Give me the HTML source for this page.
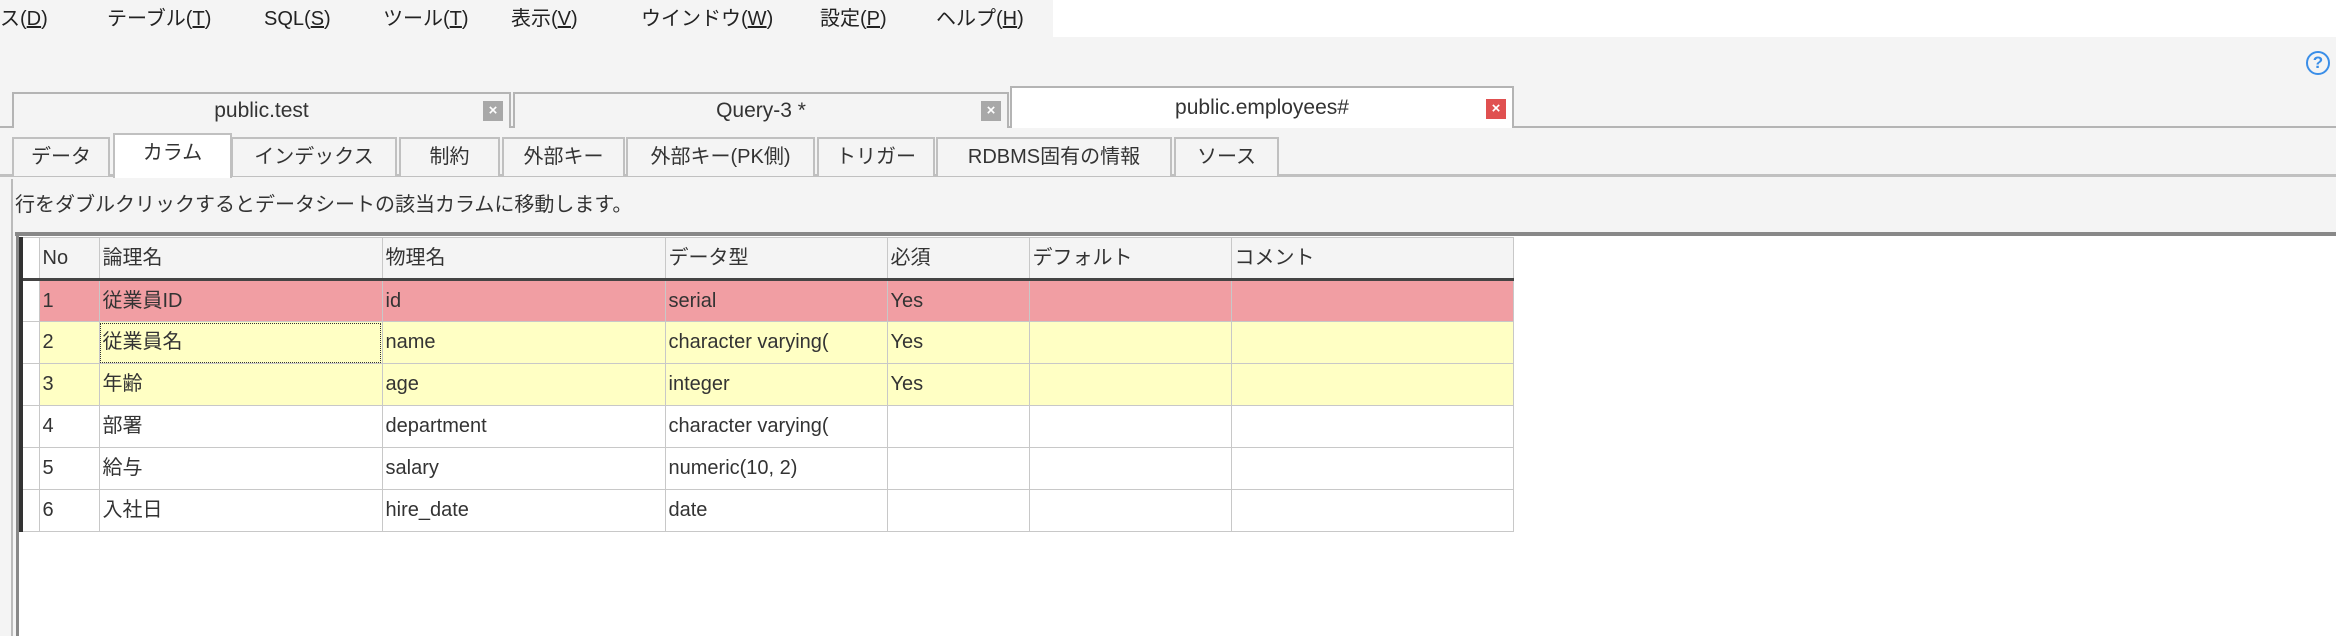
<!DOCTYPE html>
<html><head><meta charset="utf-8"><style>
*{margin:0;padding:0;box-sizing:border-box}
body{width:2336px;height:636px;background:#f4f4f4;font-family:"Liberation Sans","Noto Sans CJK JP",sans-serif;color:#222;position:relative;overflow:hidden;font-size:20px}
.abs{position:absolute}
#menu{left:0;top:0;width:1053px;height:37px;background:#f4f4f4}
#menuR{left:1053px;top:0;width:1283px;height:37px;background:#fff}
.mi{position:absolute;top:4px;height:30px;line-height:30px;font-size:20px;white-space:nowrap}
.dt{position:absolute;top:92px;height:36px;border:2px solid #b4b4b4;border-bottom:none;background:#f4f4f4;text-align:center;line-height:34px;font-size:21px;color:#333}
.dt.act{top:86px;height:42px;background:#fff;line-height:40px}
.x{position:absolute;right:6px;top:7px;width:20px;height:20px;background:#a8a8a8;color:#fff;font-size:15px;line-height:20px;text-align:center;font-weight:bold}
.st{position:absolute;top:137px;height:39px;border:2px solid #c0c0c0;border-bottom:none;background:#f4f4f4;text-align:center;line-height:36px;font-size:20px;color:#333}
.st.act{top:133px;height:45px;background:#fff}
table{position:absolute;left:19px;top:237px;border-collapse:collapse;font-size:20px;color:#333;table-layout:fixed}
td{height:42px;line-height:40px;border:1px solid #c8c8c8;padding:0 3px;white-space:nowrap;overflow:hidden;vertical-align:top}
tr.h td{background:#f4f4f4;height:41px;border-bottom:3px solid #444}
tr.r1 td{background:#f19ea3}
tr.y td{background:#ffffc4}
tr.w td{background:#fff}
td.rh{background:#fff!important;border-left:4px solid #333;padding:0}
</style></head><body>
<div class="abs" id="menu"></div><div class="abs" id="menuR"></div>
<span class="mi" style="left:0">ス(<u>D</u>)</span>
<span class="mi" style="left:107px">テーブル(<u>T</u>)</span>
<span class="mi" style="left:264px">SQL(<u>S</u>)</span>
<span class="mi" style="left:383px">ツール(<u>T</u>)</span>
<span class="mi" style="left:511px">表示(<u>V</u>)</span>
<span class="mi" style="left:641px">ウインドウ(<u>W</u>)</span>
<span class="mi" style="left:820px">設定(<u>P</u>)</span>
<span class="mi" style="left:936px">ヘルプ(<u>H</u>)</span>
<div class="abs" style="left:2306px;top:51px;width:24px;height:24px;border:2.5px solid #3a8ee8;border-radius:50%;color:#3a8ee8;font-size:17px;font-weight:bold;text-align:center;line-height:19px">?</div>

<div class="abs" style="left:0;top:126px;width:2336px;height:2px;background:#b4b4b4"></div>
<div class="dt" style="left:12px;width:499px">public.test<span class="x">×</span></div>
<div class="dt" style="left:513px;width:496px">Query-3 *<span class="x">×</span></div>
<div class="dt act" style="left:1010px;width:504px">public.employees#<span class="x" style="background:#e05050;top:11px">×</span></div>

<div class="abs" style="left:0;top:174px;width:2336px;height:3px;background:#c0c0c0"></div>
<div class="st" style="left:12px;width:98px">データ</div>
<div class="st act" style="left:113px;width:119px">カラム</div>
<div class="st" style="left:231px;width:166px">インデックス</div>
<div class="st" style="left:399px;width:101px">制約</div>
<div class="st" style="left:502px;width:123px">外部キー</div>
<div class="st" style="left:626px;width:189px">外部キー(PK側)</div>
<div class="st" style="left:817px;width:118px">トリガー</div>
<div class="st" style="left:936px;width:236px">RDBMS固有の情報</div>
<div class="st" style="left:1174px;width:105px">ソース</div>

<div class="abs" style="left:11px;top:179px;width:2px;height:457px;background:#bbb"></div>
<div class="abs" style="left:15px;top:188px;font-size:20px;color:#333">行をダブルクリックするとデータシートの該当カラムに移動します。</div>
<div class="abs" style="left:15px;top:232px;width:2321px;height:4px;background:#888"></div>
<div class="abs" style="left:16px;top:232px;width:3px;height:404px;background:#888"></div>
<div class="abs" style="left:19px;top:236px;width:2317px;height:400px;background:#fff"></div>

<table>
<colgroup><col style="width:18px"><col style="width:60px"><col style="width:283px"><col style="width:283px"><col style="width:222px"><col style="width:142px"><col style="width:202px"><col style="width:282px"></colgroup>
<tr class="h"><td class="rh"></td><td>No</td><td>論理名</td><td>物理名</td><td>データ型</td><td>必須</td><td>デフォルト</td><td>コメント</td></tr>
<tr class="r1"><td class="rh"></td><td>1</td><td>従業員ID</td><td>id</td><td>serial</td><td>Yes</td><td></td><td></td></tr>
<tr class="y"><td class="rh"></td><td>2</td><td style="outline:1px dotted #333;outline-offset:-2px">従業員名</td><td>name</td><td>character varying(</td><td>Yes</td><td></td><td></td></tr>
<tr class="y"><td class="rh"></td><td>3</td><td>年齢</td><td>age</td><td>integer</td><td>Yes</td><td></td><td></td></tr>
<tr class="w"><td class="rh"></td><td>4</td><td>部署</td><td>department</td><td>character varying(</td><td></td><td></td><td></td></tr>
<tr class="w"><td class="rh"></td><td>5</td><td>給与</td><td>salary</td><td>numeric(10, 2)</td><td></td><td></td><td></td></tr>
<tr class="w"><td class="rh"></td><td>6</td><td>入社日</td><td>hire_date</td><td>date</td><td></td><td></td><td></td></tr>
</table>
</body></html>
